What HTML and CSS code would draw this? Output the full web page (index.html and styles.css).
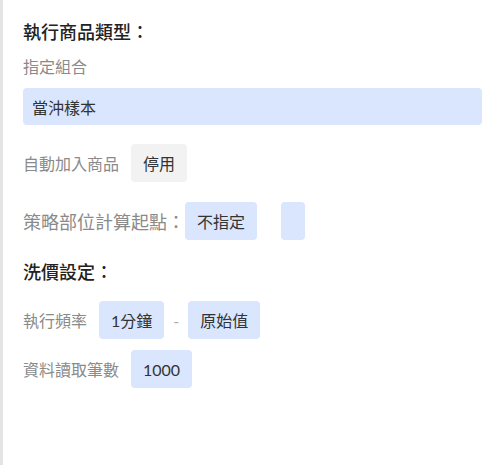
FILE: index.html
```html
<!DOCTYPE html>
<html lang="zh-Hant">
<head>
<meta charset="utf-8">
<link rel="stylesheet" href="styles.css">
</head>
<body>
<div class="panel">
  <div class="heading h1">執行商品類型：</div>
  <div class="sub">指定組合</div>
  <div class="box">當沖樣本</div>

  <div class="row r1">
    <span class="label">自動加入商品</span>
    <span class="chip grey">停用</span>
  </div>

  <div class="row r2">
    <span class="label big">策略部位計算起點：</span>
    <span class="chip">不指定</span>
    <span class="sep"></span>
    <span class="chip empty"></span>
  </div>

  <div class="heading h2">洗價設定：</div>

  <div class="row r3">
    <span class="label">執行頻率</span>
    <span class="chip">1分鐘</span>
    <span class="sep">-</span>
    <span class="chip">原始值</span>
  </div>

  <div class="row r4">
    <span class="label">資料讀取筆數</span>
    <span class="chip">1000</span>
  </div>
</div>
</body>
</html>
```

FILE: styles.css
```css
html, body {
  margin: 0;
  padding: 0;
  background: #ffffff;
}

body {
  font-family: Lato, "Noto Sans CJK TC", sans-serif;
  width: 491px;
  height: 465px;
  overflow: hidden;
}

.panel {
  box-sizing: border-box;
  height: 465px;
  border-left: 3px solid #e4e4e4;
  padding: 20px 10px 0 20px;
  display: flex;
  flex-direction: column;
  align-items: flex-start;
}

.heading {
  font-size: 18px;
  line-height: 24px;
  font-weight: 500;
  color: #222222;
}

.sub {
  margin-top: 11px;
  font-size: 16px;
  line-height: 24px;
  color: #8a8a8a;
}

.box {
  box-sizing: border-box;
  margin-top: 9px;
  width: 459px;
  height: 37px;
  padding: 0 9px;
  display: flex;
  align-items: center;
  font-size: 16px;
  color: #333333;
  background: #d9e6fd;
  border-radius: 4px;
}

.row {
  display: flex;
  align-items: center;
  height: 38px;
}

.r1 { margin-top: 19px; }
.r2 { margin-top: 20px; }
.h2 { margin-top: 20px; }
.r3 { margin-top: 17px; }
.r4 { margin-top: 11px; }

.label {
  font-size: 16px;
  color: #8a8a8a;
  margin-right: 12px;
}

.label.big {
  font-size: 18px;
  margin-right: 0;
}

.chip {
  box-sizing: border-box;
  height: 38px;
  padding: 0 12px;
  display: inline-flex;
  align-items: center;
  font-size: 16px;
  color: #333333;
  background: #d9e6fd;
  border-radius: 4px;
}

.chip.grey {
  background: #f2f2f2;
}

.chip.empty {
  width: 24px;
  padding: 0;
}

.sep {
  width: 24px;
  text-align: center;
  font-size: 16px;
  color: #aaaaaa;
}
```
